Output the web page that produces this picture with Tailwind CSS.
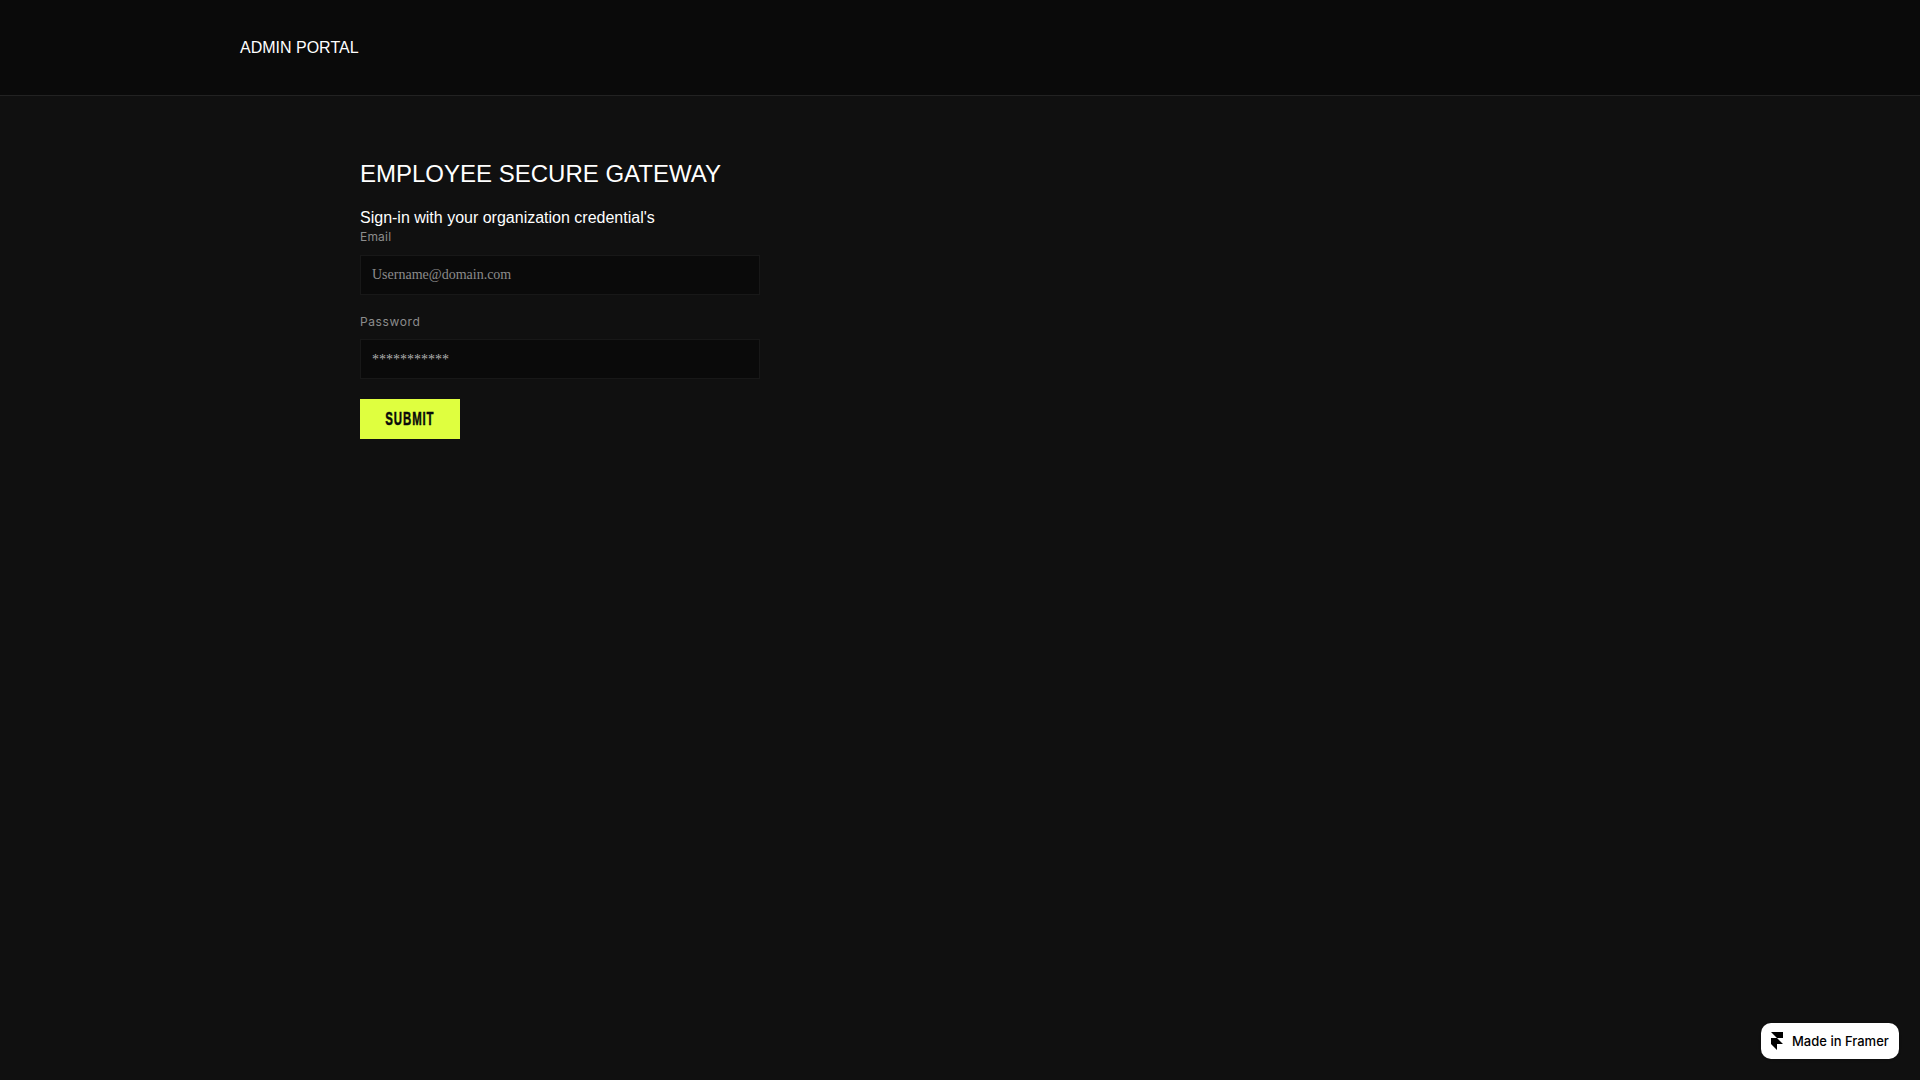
<!DOCTYPE html>
<html lang="en">
<head>
<meta charset="utf-8">
<title>Admin Portal</title>
<script src="https://cdn.jsdelivr.net/npm/@tailwindcss/browser@4"></script>
</head>
<body class="relative m-0 h-[1080px] w-full overflow-hidden bg-[#101010] font-['Liberation_Sans',sans-serif] text-white">
<header class="flex h-[96px] items-center border-b border-[#222222] bg-[#0a0a0a] pl-[240px]">
  <span class="text-base leading-[19px]">ADMIN PORTAL</span>
</header>
<main class="flex w-[400px] flex-col pt-[63px] ml-[360px]">
  <h1 class="text-2xl leading-[29px] font-normal">EMPLOYEE SECURE GATEWAY</h1>
  <p class="mt-[20px] text-base leading-[19px]">Sign-in with your organization credential's</p>
  <label class="mt-[3px] font-['Inter',sans-serif] text-xs leading-[14px] tracking-[0.2px] text-[#8c8c8c]">Email</label>
  <input class="mt-[11px] h-[40px] w-full border border-[#181818] bg-[#0a0a0a] px-[11px] font-['Liberation_Serif',serif] text-sm text-[#999999] outline-none placeholder:text-[#8c8c8c]" placeholder="Username@domain.com">
  <label class="mt-[20px] font-['Inter',sans-serif] text-xs leading-[14px] tracking-[0.6px] text-[#8c8c8c]">Password</label>
  <input class="mt-[10px] h-[40px] w-full border border-[#181818] bg-[#0a0a0a] px-[11px] pt-[2px] font-['Liberation_Serif',serif] text-sm outline-none placeholder:text-[#b0b0b0]" placeholder="***********">
  <button class="mt-[20px] flex h-[40px] w-[100px] items-center justify-center bg-[#dfff3f] font-['Liberation_Sans',sans-serif] text-[19px] font-bold tracking-[1.5px] text-[#0a0a0a]"><span class="inline-block scale-x-[0.6] [-webkit-text-stroke:0.5px_#0a0a0a]">SUBMIT</span></button>
</main>
<a class="absolute right-[21px] bottom-[21px] flex h-[36px] w-[138px] items-center gap-[9px] rounded-[10px] bg-white pl-[10px] font-['Inter',sans-serif] text-[13px] font-medium text-black shadow-sm">
  <svg class="h-[18px] w-[12px]" viewBox="4 0 16 24" fill="#000"><path d="M4 0h16v8h-8zM4 8h8l8 8H4zM4 16h8v8z"/></svg>
  <span class="pt-[1px]">Made in Framer</span>
</a>
</body>
</html>
